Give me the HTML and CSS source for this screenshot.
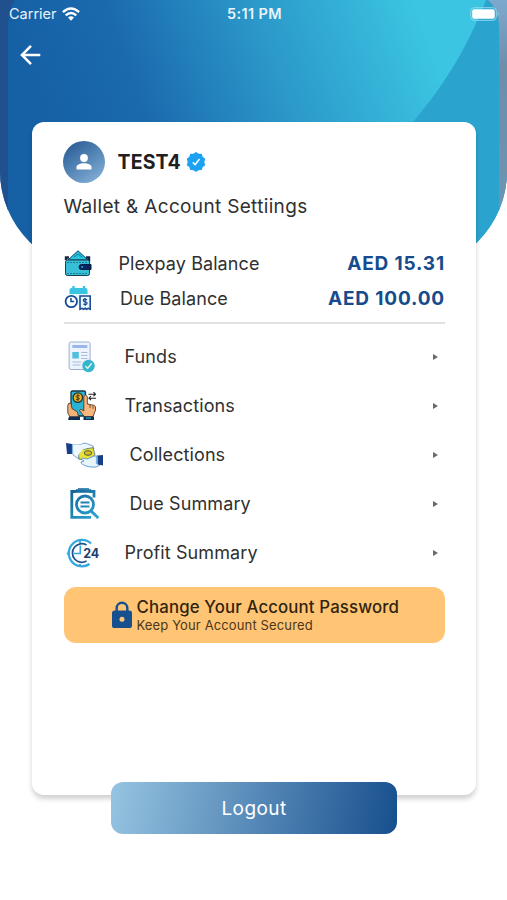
FILE: index.html
```html
<!DOCTYPE html>
<html lang="en">
<head>
<meta charset="utf-8">
<title>Wallet &amp; Account</title>
<link rel="stylesheet" href="styles.css">
</head>
<body>
<div class="screen">
  <svg class="backdrop" viewBox="0 0 507 271" preserveAspectRatio="none" aria-hidden="true">
    <defs>
      <linearGradient id="sea" gradientUnits="userSpaceOnUse" x1="65" y1="175" x2="430" y2="45">
        <stop offset="0" stop-color="#1660a6"/><stop offset=".25" stop-color="#1b6aae"/><stop offset=".6" stop-color="#2b98c9"/><stop offset="1" stop-color="#3bc5e2"/>
      </linearGradient>
      <linearGradient id="edge" x1="0" y1="0" x2="0" y2="1"><stop offset="0" stop-color="#7da9cf"/><stop offset=".25" stop-color="#6e8eaa"/><stop offset="1" stop-color="#6c98b4"/></linearGradient>
      <linearGradient id="clip" gradientUnits="userSpaceOnUse" x1="8" y1="0" x2="32" y2="30"><stop offset="0" stop-color="#155f91"/><stop offset="1" stop-color="#2ba3d2"/></linearGradient>
    </defs>
    <rect width="507" height="271" fill="url(#sea)"/>
    <path d="M486 0C468 45 447 82 413 122C380 165 340 210 290 271H507V0Z" fill="#2ba3cf"/>
    <path d="M0 0H15Q9 8 8 24V271H0Z" fill="#20518e"/>
    <path d="M488 0Q499 9 499 28V271H507V0Z" fill="url(#edge)"/>
  </svg>

  <header class="status">
    <div class="carrier"><span>Carrier</span>
      <svg width="18" height="14" viewBox="0 0 18 14" fill="none" stroke="#fff" stroke-width="2.4"><path d="M.9 5.1Q9-2.1 17.1 5.1M3.7 8.3Q9 3.7 14.3 8.3"/><path d="M6 10.4Q9 8 12 10.4L9 13.8Z" fill="#fff" stroke="none"/></svg>
    </div>
    <strong class="time">5:11 PM</strong>
    <svg class="battery" width="30" height="14" viewBox="0 0 30 14"><rect x=".7" y=".7" width="25.6" height="12.6" rx="3.5" fill="none" stroke="#8bd8ed"/><rect x="2.2" y="2.3" width="22.6" height="9.4" rx="2" fill="#fff"/><path d="M27.7 5Q30 7 27.7 9Z" fill="#a5c4dd"/></svg>
  </header>
  <nav class="nav">
    <svg width="22" height="22" viewBox="0 0 22 22" fill="none" stroke="#fff" stroke-width="2.5"><path d="M20.3 11H2.5M11 1.8 1.9 11l9.1 9.2"/></svg>
  </nav>

  <main class="card">
    <div class="profile">
      <div class="avatar"><svg width="16" height="16" viewBox="0 0 16 16" fill="#fff"><circle cx="8" cy="4" r="3.9"/><path d="M.5 15.5V13C.5 10.5 5 9.3 8 9.3s7.5 1.2 7.5 3.7v2.5Z"/></svg></div>
      <h1>TEST4</h1>
      <svg width="20" height="20" viewBox="0 0 20 20"><path d="M10 .7 12.4 2.4 15.3 2.5 16.2 5.3 18.5 7 17.6 10 18.5 12.9 16.2 14.6 15.3 17.4 12.4 17.5 10 19.2 7.6 17.5 4.7 17.4 3.8 14.6 1.5 12.9 2.4 10 1.5 7 3.8 5.3 4.7 2.5 7.6 2.4Z" fill="#1da1f2" stroke="#1da1f2" stroke-width="1.3" stroke-linejoin="round"/><path d="m6.8 10.4 2.3 2.2L13.5 7" fill="none" stroke="#fff" stroke-width="1.5"/></svg>
    </div>
    <h2>Wallet &amp; Account Settiings</h2>

    <div class="balance first">
      <svg width="28" height="28" viewBox="0 0 28 28"><path d="M4 10 14 .8 24 10Z" fill="#28c5df" stroke="#153f5e"/><path d="m10 7 4-3 4 3" fill="none" stroke="#087d9c"/><path d="M2 10V7.5h3M22 7.5h3v5" fill="none" stroke="#112747" stroke-width="2.4"/><rect x="1.5" y="10" width="24" height="15.5" rx="1.8" fill="#36bfd6" stroke="#163f54"/><path d="M3 12.5h21M3 23.5h21" stroke="#167e97" stroke-dasharray="2 1"/><path d="M27 14.5H17.5q-2.5 0-2.5 2.5t2.5 2.5H27Z" fill="#06245f" stroke="#071d43"/><circle cx="18.2" cy="17" r=".9" fill="#2ba8d3"/></svg>
      <span class="name">Plexpay Balance</span><b>AED 15.31</b>
    </div>
    <div class="balance due">
      <svg width="28" height="28" viewBox="0 0 28 28"><path d="M6 7h18v13H6Z" fill="#e0faff"/><path d="M5.5 9V5q0-2 2-2h14q2 0 2 2v4Z" fill="#39c4e4"/><path d="M9.5 1v4M20 1v4" stroke="#39c4e4" stroke-width="2.4"/><circle cx="7.3" cy="16.5" r="5.7" fill="#fff" stroke="#174a99" stroke-width="1.8"/><path d="M7 13v3.5h3.2" fill="none" stroke="#174a99" stroke-width="1.5"/><path d="M16 11h10.2v13.3l-2-1-1.5 1-1.6-1-1.5 1-1.6-1-2 1Z" fill="#eaf8ff" stroke="#1d4b95" stroke-width="1.6"/><path d="M23.1 14.8q-3.8-1.5-3.8.5 0 1.3 2 1.5 2 .4 1.7 1.8-.5 1.6-3.7.5M21.1 13v8" fill="none" stroke="#1d4b95" stroke-width="1.2"/></svg>
      <span class="name">Due Balance</span><b>AED 100.00</b>
    </div>

    <ul class="menu">
      <li>
        <svg width="38" height="34" viewBox="0 0 38 34"><rect x="5.1" y="2" width="21" height="27.5" rx="1.8" fill="#edf4fc" stroke="#9aaed6"/><rect x="8.3" y="5" width="15" height="3" fill="#9bb5ed"/><rect x="8.3" y="12" width="6.5" height="6.5" fill="#4fc0de"/><path d="M17 12.5h6.5m-6.5 3h6.5m-6.5 3h6.5M8.5 22h9m-9 3h8" stroke="#a7bce0"/><circle cx="24.5" cy="26" r="6.2" fill="#35b4ce"/><path d="m21.3 26 2.3 2.3 4.2-5" fill="none" stroke="#d5f5df" stroke-width="1.5"/></svg>
        <span>Funds</span><i></i>
      </li>
      <li>
        <svg width="38" height="34" viewBox="0 0 38 34"><rect x="7" y="2" width="14.5" height="25" rx="1.5" fill="#28b4d2" stroke="#133647" stroke-width="1.3"/><circle cx="13.8" cy="8.6" r="4.7" fill="#e7b32c" stroke="#2b3030" stroke-width="1.3"/><path d="M15.7 6.8q-3.6-1.2-3.6.6c0 1.6 3.5.8 3.4 2.4q-.3 1.4-3.5.5M13.8 5.2v6.8" fill="none" stroke="#49350e"/><path d="M24.5 5.2h7m-2-2 2 2-2 2M32 9.2h-7m2-2-2 2 2 2" fill="none" stroke="#222" stroke-width="1.1"/><path d="M7 14q-3.4-.5-3.2 3v7l2.4 4h8.3l-1-5L8 19.5Z" fill="#f2b176" stroke="#593725" stroke-width=".9"/><path d="M19.8 22V7.5q1.8-2.8 3.5 0V15l7 1.4q1.8.7 1.2 4.6L29 27.5h-8.7l-4.8-6q1-2.2 4.3.5Z" fill="#f5b77e" stroke="#593725" stroke-width=".9"/><path d="M5 27.5h11V31H4Zm14.5 0H30V31H19.5Z" fill="#102d50"/><path d="M22 29h5" stroke="#2ba9c9" stroke-width="1.3"/><path d="M26 16v3m3-2.3v3" stroke="#7a4e2a"/></svg>
        <span>Transactions</span><i></i>
      </li>
      <li class="inset">
        <svg width="43" height="34" viewBox="0 0 43 34"><path d="M8 7h7l6-2 8 3 1 3-8 2-7 8-6-4Z" fill="#edf8fd" stroke="#6f97cb" stroke-width=".9"/><path d="m14.5 17 3.5-5.5 11-1.8 2 7-6 5.5-10-1Z" fill="#e9e238" stroke="#4d6870" stroke-width=".8"/><ellipse cx="24" cy="15" rx="3.8" ry="2.3" fill="#d9bd2c" stroke="#4b6137"/><path d="M8 7h7l5-1 6 2.5-7 3-5 6-5-2.5Z" fill="#edf8fd"/><path d="M34 18h-4l-7 3-5-1q-2 1 2 3l-3 1q0 3 9 5h6l4-2Z" fill="#e7f5fc" stroke="#5b93cb" stroke-width=".9"/><path d="m2 5 6 1v10H3Z" fill="#193e86"/><path d="m33.5 17.5 5.5-.5v10.5l-5.5-1Z" fill="#193e86"/><path d="M8.5 6.5v8.5m24 3v8" stroke="#76b2e2" stroke-width="1.2"/></svg>
        <span>Collections</span><i></i>
      </li>
      <li class="inset">
        <svg width="43" height="34" viewBox="0 0 43 34" fill="none" stroke="url(#clip)" stroke-width="2.8"><path d="M12 4.5H7.8v25.8H27M25 4.5h5v6"/><path d="M12 4h15" stroke-width="3.6"/><path d="M14 1.8h11" stroke-width="1.2"/><circle cx="21" cy="17.5" r="8.5"/><path d="M16.5 15.6h9m-9 4h9" stroke-width="2"/><path d="m27 24 7.3 7" stroke-width="3"/></svg>
        <span>Due Summary</span><i></i>
      </li>
      <li>
        <svg width="38" height="34" viewBox="0 0 38 34" fill="none"><path d="M27 7.5A13.2 13.2 0 1 0 25.5 28" stroke="#35a7df" stroke-width="2.3"/><path d="M22.5 9A9.3 9.3 0 1 0 22.5 25" stroke="#20528b" stroke-width="1.8"/><path d="M16.3 9.5v8H10" stroke="#35a7df" stroke-width="1.6"/><path d="M16 4v3M2.8 17.5h3M16 28v3" stroke="#35a7df" stroke-width="1.8"/><text class="hours" x="19.2" y="22.2">24</text></svg>
        <span>Profit Summary</span><i></i>
      </li>
    </ul>

    <div class="password">
      <svg width="22" height="28" viewBox="0 0 22 28"><path d="M5.7 10V7a5.3 5.3 0 0 1 10.6 0v3" fill="none" stroke="#16508e" stroke-width="2.4"/><rect x="1" y="9.5" width="20" height="17.5" rx="2.6" fill="#16508e"/><circle cx="11" cy="18.3" r="2.5" fill="#ffc575"/></svg>
      <div><strong>Change Your Account Password</strong><small>Keep Your Account Secured</small></div>
    </div>
  </main>
  <button class="logout">Logout</button>
</div>
</body>
</html>
```
FILE: styles.css
```css
* { box-sizing: border-box; }
body { margin: 0; background: #fff; font-family: Inter, sans-serif; color: #303030; }
.screen { position: relative; height: 900px; overflow: hidden; display: flex; flex-direction: column; isolation: isolate; }
.backdrop { position: absolute; z-index: -1; top: 0; left: 0; width: 100%; height: 271px; border-radius: 0 0 100px 100px; }
svg { display: block; flex: none; }

.status { height: 27px; padding: 0 7px 0 9px; display: grid; grid-template-columns: 1fr auto 1fr; align-items: center; color: #e9f3fa; font-size: 14.5px; }
.carrier { display: flex; align-items: center; gap: 5px; letter-spacing: 0; }
.time { font-size: 14.5px; font-weight: 600; letter-spacing: .4px; }
.battery { justify-self: end; }
.nav { height: 95px; padding: 17px 20px; }

.card { width: 444px; height: 673px; margin-left: 32px; flex: none; padding: 19px 31.5px 0; border-radius: 12px; background: #fff; box-shadow: 0 4px 5px rgba(0,0,0,.18); }
.profile { display: flex; align-items: center; height: 42px; }
.avatar { width: 42px; height: 42px; border-radius: 50%; display: grid; place-items: center; background: linear-gradient(145deg, #215590, #8bb7dc); margin-left: -.5px; }
h1 { margin: 0 5px 0 12.5px; font-size: 19.5px; font-weight: 700; line-height: 24px; letter-spacing: .15px; color: #202020; }
h2 { margin: 11px 0 0; font-size: 19px; font-weight: 400; line-height: 26px; letter-spacing: .33px; white-space: nowrap; }
.balance { display: flex; align-items: center; height: 35px; font-size: 18px; letter-spacing: .08px; }
.balance.first { margin-top: 26px; }
.name { flex: 1; margin-left: 27px; }
.due .name { margin-left: 28.5px; }
.balance b { color: #164c8d; font-size: 19px; font-weight: 650; letter-spacing: .85px; margin-right: -.5px; }
.menu { list-style: none; margin: 6px 0 0; padding: 8px 0 0; border-top: 2px solid #e2e2e2; }
.menu li { display: flex; align-items: center; height: 49px; font-size: 18px; letter-spacing: .1px; }
.menu span { margin-left: 23px; flex: 1; }
.menu i { border: solid transparent; border-width: 3.5px 0 3.5px 5px; border-left-color: #696969; margin-right: 7px; }
.hours { font: 700 12.5px Inter, sans-serif; fill: #213e70; letter-spacing: -.2px; }
.password { height: 56px; margin-top: 10px; padding-left: 47.5px; display: flex; align-items: center; gap: 3.5px; border-radius: 12px; background: #ffc575; }
.password div { display: flex; flex-direction: column; white-space: nowrap; }
.password strong { font-size: 16.8px; line-height: 20px; font-weight: 500; letter-spacing: .15px; color: #30240f; }
.password small { font-size: 13px; line-height: 16px; letter-spacing: .13px; color: #4b371a; }
.logout { width: 286px; height: 52px; flex: none; margin: -13px 0 0 111px; border: 0; border-radius: 12px; background: linear-gradient(100deg, #96c4e1, #174f8e); color: #fff; font: 400 19px Inter, sans-serif; letter-spacing: .4px; }
```
